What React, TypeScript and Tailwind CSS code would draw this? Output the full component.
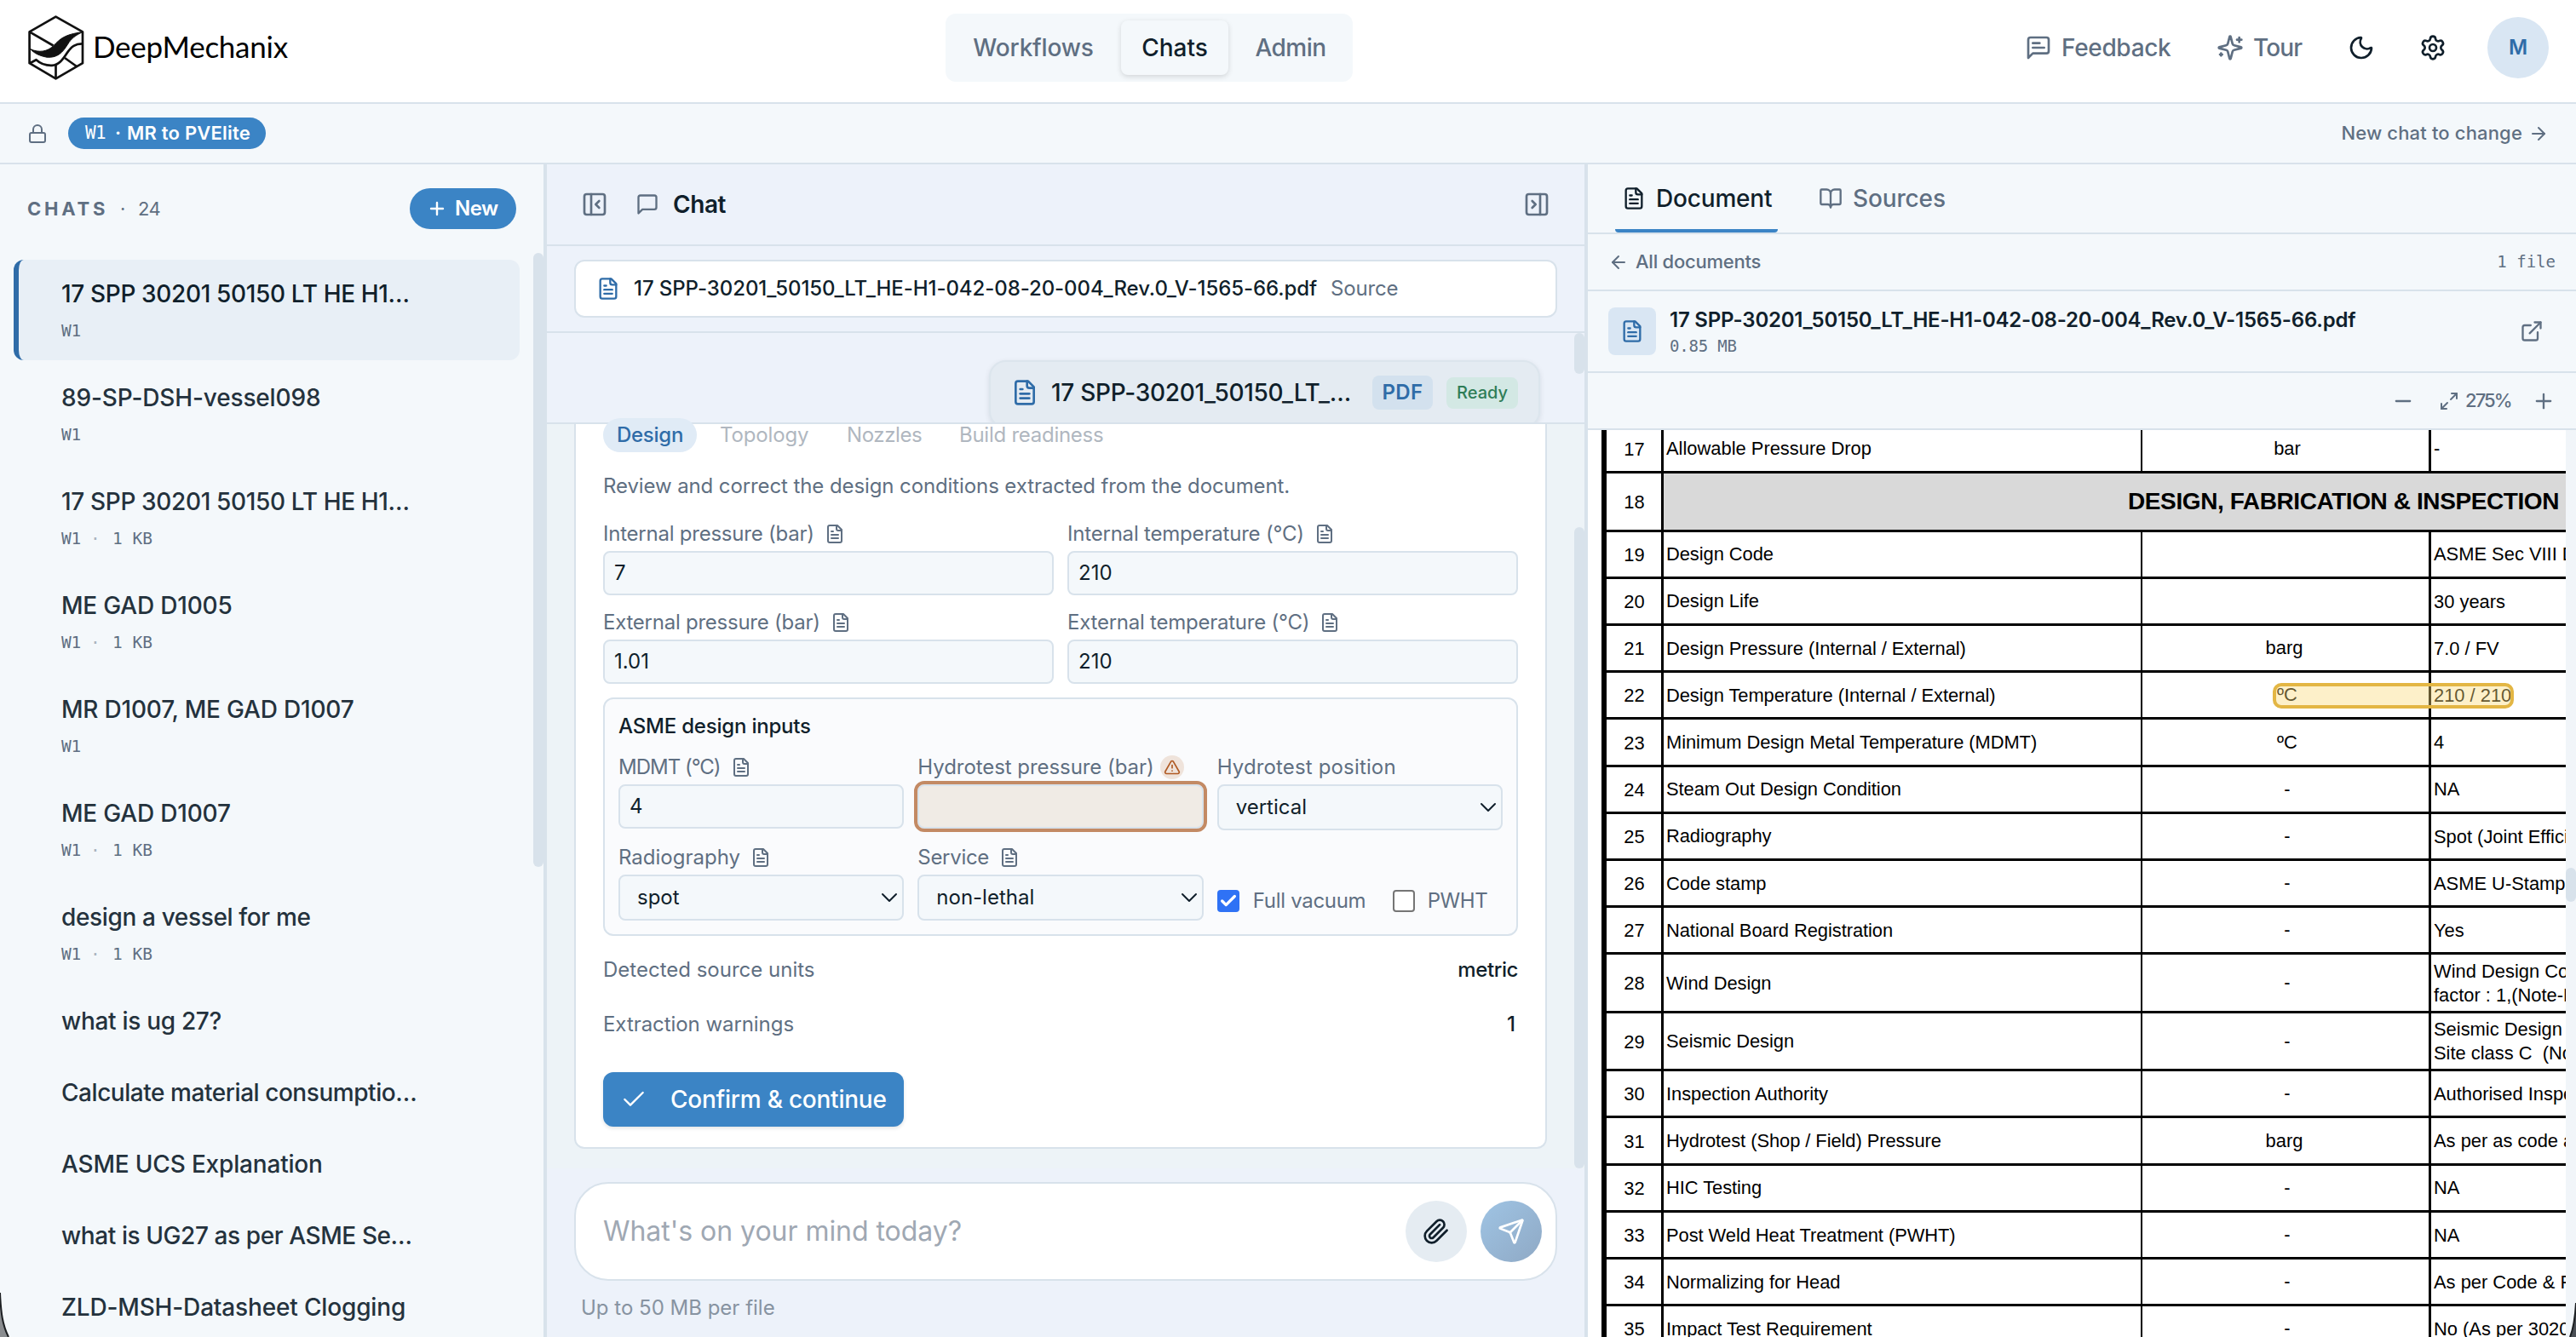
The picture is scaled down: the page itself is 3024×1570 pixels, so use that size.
import type { ReactNode } from "react";
import {
  ArrowLeft,
  ArrowRight,
  BookOpen,
  Check,
  Lock,
  Maximize2,
  Minus,
  Moon,
  PanelLeftClose,
  PanelRightClose,
  Plus,
  Settings,
} from "lucide-react";

type IconProps = { size?: number; className?: string; strokeWidth?: number; children?: ReactNode };

function Glyph({ size = 24, className = "", strokeWidth = 2, children }: IconProps) {
  return (
    <svg
      width={size}
      height={size}
      viewBox="0 0 24 24"
      fill="none"
      stroke="currentColor"
      strokeWidth={strokeWidth}
      strokeLinecap="round"
      strokeLinejoin="round"
      className={`shrink-0 ${className}`}
    >
      {children}
    </svg>
  );
}

const FileText = (p: IconProps) => (
  <Glyph {...p}>
    <path d="M15 2H6a2 2 0 0 0-2 2v16a2 2 0 0 0 2 2h12a2 2 0 0 0 2-2V7Z" />
    <path d="M14 2v4a2 2 0 0 0 2 2h4" />
    <path d="M10 9H8" />
    <path d="M16 13H8" />
    <path d="M16 17H8" />
  </Glyph>
);

const ChatBubble = (p: IconProps) => (
  <Glyph {...p}>
    <path d="M21 15a2 2 0 0 1-2 2H7l-4 4V5a2 2 0 0 1 2-2h14a2 2 0 0 1 2 2z" />
  </Glyph>
);

const FeedbackIcon = (p: IconProps) => (
  <Glyph {...p}>
    <path d="M21 15a2 2 0 0 1-2 2H7l-4 4V5a2 2 0 0 1 2-2h14a2 2 0 0 1 2 2z" />
    <path d="M13 8H7" />
    <path d="M17 12H7" />
  </Glyph>
);

const Sparkles = (p: IconProps) => (
  <Glyph {...p}>
    <path d="M9.937 15.500A2 2 0 0 0 8.500 14.063l-6.135-1.582a.5.5 0 0 1 0-.962L8.500 9.936A2 2 0 0 0 9.937 8.500l1.582-6.135a.5.5 0 0 1 .963 0L14.063 8.500A2 2 0 0 0 15.500 9.937l6.135 1.581a.5.5 0 0 1 0 .964L15.500 14.063a2 2 0 0 0-1.437 1.437l-1.582 6.135a.5.5 0 0 1-.963 0z" />
    <path d="M20 3v4" />
    <path d="M22 5h-4" />
    <path d="M4 17v2" />
    <path d="M5 18H3" />
  </Glyph>
);

const ExternalLink = (p: IconProps) => (
  <Glyph {...p}>
    <path d="M15 3h6v6" />
    <path d="M10 14 21 3" />
    <path d="M18 13v6a2 2 0 0 1-2 2H5a2 2 0 0 1-2-2V8a2 2 0 0 1 2-2h6" />
  </Glyph>
);

const Paperclip = (p: IconProps) => (
  <Glyph {...p}>
    <path d="m21.44 11.05-9.19 9.19a6 6 0 0 1-8.49-8.49l8.57-8.57A4 4 0 1 1 18 8.84l-8.59 8.57a2 2 0 0 1-2.83-2.83l8.49-8.48" />
  </Glyph>
);

const SendIcon = (p: IconProps) => (
  <Glyph {...p}>
    <path d="M14.536 21.686a.5.5 0 0 0 .937-.024l6.5-19a.496.496 0 0 0-.635-.635l-19 6.5a.5.5 0 0 0-.024.937l7.93 3.18a2 2 0 0 1 1.112 1.11z" />
    <path d="m21.854 2.147-10.94 10.939" />
  </Glyph>
);

const Warning = (p: IconProps) => (
  <Glyph {...p}>
    <path d="m21.73 18-8-14a2 2 0 0 0-3.48 0l-8 14A2 2 0 0 0 4 21h16a2 2 0 0 0 1.73-3" />
    <path d="M12 9v4" />
    <path d="M12 17h.01" />
  </Glyph>
);

function Logo() {
  return (
    <svg width="66" height="76" viewBox="0 0 66 76" fill="none" stroke="#111" strokeWidth="2.700" strokeLinejoin="round" className="shrink-0">
      <path d="M32.500 1.600 64 19.400v36.800L32.500 74.400 1.600 56.200V19.400Z" />
      <path d="M1.600 19.400 29.500 35.500" />
      <path
        d="M2.500 39.500C13 44.500 23 42.500 30 35.500 37.500 28 42 22.500 64 19.600 55.500 23.500 50.500 27.500 46.500 34 40.500 44 34 50.200 22 49.200 13.500 47.500 7.500 45 2.500 39.500Z"
        fill="#111"
        strokeWidth="1"
      />
      <path d="M2.500 56 9.500 52.200C16 58.200 22.500 59 28 58.800 36 58.500 41 51.500 45.500 44.500 51 36 55.500 33.500 63.500 33.400" />
      <path d="M32.500 58.500V74M43 50 57 60" />
    </svg>
  );
}

function Header() {
  return (
    <header className="flex h-[122px] shrink-0 items-center border-b-2 border-[#d8e2eb] bg-white pb-2 pl-[33px] pr-8">
      <div className="flex w-[1077px] items-center">
        <Logo />
        <span className="pb-[5px] pl-[10px] font-[Lato] text-[35px] leading-[44px] tracking-[-0.25px] text-black">DeepMechanix</span>
      </div>
      <nav className="flex items-center gap-2 rounded-xl bg-[#f4f8fb] p-2 text-[28px] font-medium text-[#5f6f82]">
        <span className="flex h-16 w-[190px] items-center justify-center tracking-[-0.17px]">Workflows</span>
        <span className="flex h-16 w-[126px] items-center justify-center rounded-lg bg-[#f4f8fb] text-[#101f2b] shadow-[0_2px_6px_rgba(0,0,0,0.14)]">Chats</span>
        <span className="flex h-16 w-[130px] items-center justify-center tracking-[-0.5px]">Admin</span>
      </nav>
      <div className="ml-auto flex items-center text-[28px] font-medium text-[#5f6f82]">
        <FeedbackIcon size={32} />
        <span className="ml-[11px] w-[182px] tracking-[-0.33px]">Feedback</span>
        <Sparkles size={32} />
        <span className="ml-[11px] w-[111px] tracking-[-0.9px]">Tour</span>
        <Moon size={32} className="text-[#101f2b]" />
        <Settings size={32} className="ml-[52px] text-[#101f2b]" />
        <span className="ml-12 flex size-[72px] items-center justify-center rounded-full bg-[#d9e6f3] text-[24px] font-semibold text-[#2f6ca8]">M</span>
      </div>
    </header>
  );
}

function WorkflowBar() {
  return (
    <div className="flex h-[71px] shrink-0 items-center border-b-2 border-[#d8e2eb] bg-[#f4f8fb] pl-8 pr-8 text-[#5f6f82]">
      <Lock size={24} />
      <span className="ml-6 flex h-[37px] items-center rounded-full bg-[#3b84c5] pl-5 pr-[18px] text-[22px] text-white">
        <span className="w-[35px] font-['DejaVu_Sans_Mono'] text-[21px] tracking-[-0.6px]">W1</span>
        <span className="w-[14px] font-semibold">·</span>
        <span className="font-semibold tracking-[0.2px]">MR to PVElite</span>
      </span>
      <span className="ml-auto text-[22px] font-medium tracking-[0.16px]">New chat to change</span>
      <ArrowRight size={24} className="ml-[7px]" />
    </div>
  );
}

const chats: { title: string; meta?: string[]; cls: string; active?: boolean }[] = [
  { title: "17 SPP 30201 50150 LT HE H1…", meta: ["W1"], cls: "tracking-[-0.35px]", active: true },
  { title: "89-SP-DSH-vessel098", meta: ["W1"], cls: "tracking-[-0.15px]" },
  { title: "17 SPP 30201 50150 LT HE H1…", meta: ["W1", "1 KB"], cls: "tracking-[-0.35px]" },
  { title: "ME GAD D1005", meta: ["W1", "1 KB"], cls: "tracking-[-0.2px]" },
  { title: "MR D1007, ME GAD D1007", meta: ["W1"], cls: "tracking-[-0.2px]" },
  { title: "ME GAD D1007", meta: ["W1", "1 KB"], cls: "tracking-[-0.2px]" },
  { title: "design a vessel for me", meta: ["W1", "1 KB"], cls: "tracking-[-0.36px]" },
  { title: "what is ug 27?", cls: "tracking-[-0.3px]" },
  { title: "Calculate material consumptio…", cls: "tracking-[-0.45px]" },
  { title: "ASME UCS Explanation", cls: "tracking-[-0.18px]" },
  { title: "what is UG27 as per ASME Se…", cls: "tracking-[-0.41px]" },
  { title: "ZLD-MSH-Datasheet Clogging", cls: "tracking-[-0.16px]" },
];

function Sidebar() {
  return (
    <aside className="flex w-[642px] shrink-0 flex-col border-r-4 border-[#d8e2eb] bg-[#f4f8fb]">
      <div className="flex h-[104px] shrink-0 items-center pl-8 pr-8 text-[22px] text-[#5f6f82]">
        <span className="w-[109px] font-bold tracking-[3.8px]">CHATS</span>
        <span className="w-[21px]">·</span>
        <span className="tracking-[-0.6px]">24</span>
        <span className="ml-auto flex h-12 w-[125px] items-center rounded-full bg-[#3b84c5] pl-5 text-[24px] font-semibold tracking-[-0.5px] text-white">
          <Plus size={24} className="mr-[9px]" strokeWidth={2.4} />
          New
        </span>
      </div>
      <div className="flex min-h-0 flex-1">
        <div className="flex min-w-0 flex-1 flex-col gap-1 overflow-hidden pl-4 pr-4 pt-2">
          {chats.map((c, i) => (
            <div
              key={i}
              className={`flex shrink-0 flex-col rounded-xl border-l-[6px] py-5 pl-[50px] ${
                c.active ? "border-[#2f6ca8] bg-[#e8eff6] text-[#101f2b]" : "border-transparent text-[#24323d]"
              }`}
            >
              <span className={`text-[28px] font-medium leading-10 ${c.cls}`}>{c.title}</span>
              {c.meta && (
                <span className="mt-[9px] flex font-['DejaVu_Sans_Mono'] text-[19.5px] leading-[29px] text-[#5f6f82]">
                  <span className="w-[34px] tracking-[-0.2px]">{c.meta[0]}</span>
                  {c.meta[1] && (
                    <>
                      <span className="w-[26px] text-[#a9b3be]">·</span>
                      <span>{c.meta[1]}</span>
                    </>
                  )}
                </span>
              )}
            </div>
          ))}
        </div>
        <div className="h-[721px] w-3 rounded-full bg-[#d8e2eb]" />
      </div>
    </aside>
  );
}

function FieldLabel({ text, cls = "", icon = true, warn = false }: { text: string; cls?: string; icon?: boolean; warn?: boolean }) {
  return (
    <div className="flex h-8 items-center pb-px text-[24px] text-[#5f6f82]">
      <span className={cls}>{text}</span>
      {warn && (
        <span className="ml-[7px] flex size-7 items-center justify-center rounded-full bg-[#efe3db] text-[#b05a24]">
          <Warning size={20} />
        </span>
      )}
      {icon && !warn && <FileText size={24} className="ml-3" />}
    </div>
  );
}

function Field({ label, value, cls }: { label: string; value: string; cls?: string }) {
  return (
    <div className="flex flex-col gap-1">
      <FieldLabel text={label} cls={cls} />
      <div className="flex h-[52px] items-center rounded-lg border-2 border-[#d8e2eb] bg-[#f4f8fb] pl-[11px] text-[24px] text-[#101f2b]">{value}</div>
    </div>
  );
}

function Select({ label, value, cls, icon }: { label: string; value: string; cls?: string; icon?: boolean }) {
  return (
    <div className="flex flex-col gap-1">
      <FieldLabel text={label} cls={cls} icon={icon} />
      <div className="flex h-[54px] items-center justify-between rounded-lg border-2 border-[#d8e2eb] bg-[#f4f8fb] pl-5 pr-[5px] text-[24px] text-[#101f2b]">
        {value}
        <svg width="20" height="12" viewBox="0 0 20 12" fill="none" stroke="currentColor" strokeWidth="2" strokeLinecap="round" strokeLinejoin="round">
          <path d="m2 2 8 8 8-8" />
        </svg>
      </div>
    </div>
  );
}

function DesignForm() {
  return (
    <div className="flex w-[1142px] flex-col rounded-b-xl border-x-2 border-b-2 border-[#d8e2eb] bg-white px-8">
      <div className="flex h-[33px] items-end text-[24px] text-[#b0b7c0]">
        <div className="flex h-10 w-[110px] items-center justify-center rounded-full bg-[#e0ebf6] font-medium tracking-[-0.25px] text-[#2f6ca8]">Design</div>
        <div className="ml-[27px] flex h-10 items-center">
          <span className="w-[149px] tracking-[-0.15px]">Topology</span>
          <span className="w-[132px] tracking-[-0.4px]">Nozzles</span>
          <span className="tracking-[-0.26px]">Build readiness</span>
        </div>
      </div>
      <p className="mt-[20px] h-10 text-[24px] leading-10 tracking-[-0.1px] text-[#5f6f82]">
        Review and correct the design conditions extracted from the document.
      </p>
      <div className="mt-5 grid grid-cols-2 gap-4">
        <Field label="Internal pressure (bar)" value="7" cls="tracking-[-0.23px]" />
        <Field label="Internal temperature (°C)" value="210" cls="tracking-[-0.2px]" />
        <Field label="External pressure (bar)" value="1.01" cls="tracking-[-0.25px]" />
        <Field label="External temperature (°C)" value="210" cls="tracking-[-0.24px]" />
      </div>
      <section className="mt-4 flex h-[280px] flex-col rounded-xl border-2 border-[#d8e2eb] bg-[#fafbfd] px-4 pt-4 text-[24px]">
        <h3 className="h-8 font-medium leading-8 tracking-[-0.2px] text-[#101f2b]">ASME design inputs</h3>
        <div className="mt-4 grid grid-cols-3 gap-x-4 gap-y-4">
          <Field label="MDMT (°C)" value="4" cls="tracking-[-1px]" />
          <div className="flex flex-col gap-1">
            <FieldLabel text="Hydrotest pressure (bar)" warn cls="tracking-[-0.06px]" />
            <div className="h-[52px] rounded-lg border-2 border-[#d8e2eb] bg-[#f0ebe5] outline-4 outline-[#c38a64]" />
          </div>
          <Select label="Hydrotest position" value="vertical" icon={false} cls="tracking-[0.15px]" />
          <Select label="Radiography" value="spot" />
          <Select label="Service" value="non-lethal" cls="tracking-[-0.3px]" />
          <div className="flex items-center pt-[43px] text-[#5f6f82]">
            <span className="flex size-[26px] items-center justify-center rounded bg-[#2f72f5] text-white">
              <Check size={22} strokeWidth={3.6} />
            </span>
            <span className="ml-[16px] w-[164px] tracking-[-0.29px]">Full vacuum</span>
            <span className="size-[26px] rounded border-2 border-[#757575] bg-white" />
            <span className="ml-[15px] tracking-[-0.4px]">PWHT</span>
          </div>
        </div>
      </section>
      <div className="mt-2 flex h-16 items-center justify-between text-[24px] text-[#5f6f82]">
        <span>Detected source units</span>
        <span className="font-medium tracking-[-0.4px] text-[#101f2b]">metric</span>
      </div>
      <div className="flex h-16 items-center justify-between text-[24px] text-[#5f6f82]">
        <span className="tracking-[-0.06px]">Extraction warnings</span>
        <span className="pr-[3px] font-medium text-[#101f2b]">1</span>
      </div>
      <div className="mb-6 mt-6 flex h-16 w-[353px] items-center rounded-xl bg-[#3b84c5] pl-5 text-[28px] font-medium tracking-[-0.24px] text-white shadow-[0_2px_4px_rgba(16,31,43,0.12)]">
        <Check size={32} strokeWidth={1.8} className="mr-[27px]" />
        Confirm &amp; continue
      </div>
    </div>
  );
}

function ChatPanel() {
  return (
    <main className="flex w-[1222px] shrink-0 flex-col border-r-4 border-[#d8e2eb] bg-[#edf2fa]">
      <div className="flex h-24 shrink-0 items-center border-b-2 border-[#d8e2eb] px-10 text-[#5f6f82]">
        <PanelLeftClose size={32} />
        <ChatBubble size={28} className="ml-8" />
        <span className="ml-4 text-[28px] font-semibold tracking-[-0.45px] text-[#101f2b]">Chat</span>
        <PanelRightClose size={32} className="ml-auto" />
      </div>
      <div className="shrink-0 border-b-2 border-[#d8e2eb] px-8 py-4">
        <div className="flex h-[68px] items-center rounded-xl border-2 border-[#d8e2eb] bg-white pl-6 text-[24px]">
          <FileText size={28} className="text-[#2f6ca8]" />
          <span className="ml-4 font-medium tracking-[-0.08px] text-[#101f2b]">
            17 SPP-30201_50150_LT_HE-H1-042-08-20-004_Rev.0_V-1565-66.pdf
          </span>
          <span className="ml-[16px] tracking-[-0.15px] text-[#5f6f82]">Source</span>
        </div>
      </div>
      <div className="flex h-[107px] shrink-0 justify-end overflow-hidden border-b-2 border-[#d8e2eb]">
        <div className="mr-10 mt-8 flex h-20 w-[647px] shrink-0 items-center rounded-[20px] border-2 border-[#dce5ed] bg-[#e4ebf2] pl-6 text-[28px] font-medium shadow-[0_2px_6px_rgba(16,31,43,0.10)]">
          <FileText size={32} className="-mt-1 text-[#2f6ca8]" />
          <span className="-mt-1 ml-[15px] w-[377px] tracking-[-0.29px] text-[#101f2b]">17 SPP-30201_50150_LT_…</span>
          <span className="-mt-1 flex h-10 w-[71px] items-center justify-center rounded-lg bg-[#d3e1ee] text-[24px] font-semibold tracking-[0.3px] text-[#2f6ca8]">
            PDF
          </span>
          <span className="-mt-1 ml-4 flex h-[37px] w-[84px] items-center justify-center rounded-lg bg-[#d3e8e4] text-[20px] text-[#2f7d57]">Ready</span>
        </div>
        <div className="h-12 w-3 rounded-full bg-[#d8e2eb]" />
      </div>
      <div className="flex h-[874px] shrink-0 justify-between bg-[#edf3f7] pl-8">
        <div className="flex flex-col">
          <DesignForm />
        </div>
        <div className="mt-[121px] w-3 rounded-full bg-[#d8e2eb]" />
      </div>
      <div className="flex flex-1 flex-col px-8 pt-4">
        <div className="flex h-[116px] items-center rounded-[40px] border-2 border-[#d8e2eb] bg-white pl-8 pr-4">
          <span className="text-[32px] tracking-[-0.04px] text-[#9fa8b3]">What's on your mind today?</span>
          <span className="ml-auto flex size-[72px] items-center justify-center rounded-full bg-[#e5ecf2] text-[#101f2b]">
            <Paperclip size={32} />
          </span>
          <span className="ml-4 flex size-[72px] items-center justify-center rounded-full bg-linear-to-br from-[#9fc4e4] to-[#8fa9c5] text-white">
            <SendIcon size={32} />
          </span>
        </div>
        <span className="ml-2 mt-[14px] text-[24px] leading-9 text-[#8793a1]">Up to 50 MB per file</span>
      </div>
    </main>
  );
}

type Row = { n: number; label: string; unit?: string; value: string[]; h: string };
const rows: Row[] = [
  { n: 19, label: "Design Code", value: ["ASME Sec VIII Div.1"], h: "h-[55.2px]" },
  { n: 20, label: "Design Life", value: ["30 years"], h: "h-[55.2px]" },
  { n: 21, label: "Design Pressure (Internal / External)", unit: "barg", value: ["7.0 / FV"], h: "h-[55.2px]" },
  { n: 22, label: "Design Temperature (Internal / External)", unit: "ºC", value: ["210 / 210"], h: "h-[55.2px]" },
  { n: 23, label: "Minimum Design Metal Temperature (MDMT)", unit: "ºC", value: ["4"], h: "h-[55.2px]" },
  { n: 24, label: "Steam Out Design Condition", unit: "-", value: ["NA"], h: "h-[55.2px]" },
  { n: 25, label: "Radiography", unit: "-", value: ["Spot (Joint Efficiency)"], h: "h-[55.2px]" },
  { n: 26, label: "Code stamp", unit: "-", value: ["ASME U-Stamp"], h: "h-[55.2px]" },
  { n: 27, label: "National Board Registration", unit: "-", value: ["Yes"], h: "h-[55.2px]" },
  { n: 28, label: "Wind Design", unit: "-", value: ["Wind Design Code", "factor : 1,(Note-N)"], h: "h-[68.5px]" },
  { n: 29, label: "Seismic Design", unit: "-", value: ["Seismic Design", "Site class C  (Note)"], h: "h-[68.5px]" },
  { n: 30, label: "Inspection Authority", unit: "-", value: ["Authorised Inspector"], h: "h-[55.2px]" },
  { n: 31, label: "Hydrotest (Shop / Field) Pressure", unit: "barg", value: ["As per as code a"], h: "h-[55.2px]" },
  { n: 32, label: "HIC Testing", unit: "-", value: ["NA"], h: "h-[55.2px]" },
  { n: 33, label: "Post Weld Heat Treatment (PWHT)", unit: "-", value: ["NA"], h: "h-[55.2px]" },
  { n: 34, label: "Normalizing for Head", unit: "-", value: ["As per Code & P"], h: "h-[55.2px]" },
  { n: 35, label: "Impact Test Requirement", unit: "-", value: ["No (As per 30201)"], h: "h-[55.2px]" },
];

function SheetRow({ row }: { row: Row }) {
  return (
    <div className={`flex shrink-0 border-b-[3px] border-black ${row.h}`}>
      <div className="flex w-[67px] shrink-0 items-center justify-center border-r-[3px] border-black pl-px pt-[3px]">{row.n}</div>
      <div className="flex w-[562px] shrink-0 items-center border-r-2 border-black pl-[3px] pt-[2px] tracking-[-0.06px]">{row.label}</div>
      <div className={`flex w-[339px] shrink-0 items-center justify-center border-r-[3px] border-black pt-px ${row.unit === "barg" ? "pr-[3px]" : "pl-1"}`}>
        {row.unit}
      </div>
      <div className="flex min-w-0 flex-1 flex-col justify-center overflow-hidden pl-[3px] pt-px leading-[27.6px]">
        {row.value.map((v) => (
          <span key={v} className="whitespace-pre">
            {v}
          </span>
        ))}
      </div>
    </div>
  );
}

function DocumentPanel() {
  return (
    <section className="flex min-w-0 flex-1 flex-col bg-[#f4f8fb] text-[#5f6f82]">
      <div className="flex h-[82px] shrink-0 items-stretch border-b-2 border-[#d8e2eb] pl-8 text-[28px] font-medium">
        <div className="flex w-[191px] items-center rounded-sm border-b-4 border-[#3b84c5] pl-2 pt-[3px] text-[#101f2b]">
          <FileText size={28} />
          <span className="ml-3 tracking-[-0.18px]">Document</span>
        </div>
        <div className="ml-12 flex items-center pb-px">
          <BookOpen size={28} />
          <span className="ml-3 tracking-[-0.14px]">Sources</span>
        </div>
      </div>
      <div className="flex h-[67px] shrink-0 items-center border-b-2 border-[#d8e2eb] pl-6 pr-6 text-[22px]">
        <ArrowLeft size={24} />
        <span className="ml-2 font-medium tracking-[-0.24px]">All documents</span>
        <span className="ml-auto font-['DejaVu_Sans_Mono'] text-[19px]">1 file</span>
      </div>
      <div className="flex h-24 shrink-0 items-center border-b-2 border-[#d8e2eb] pl-6 pr-[38px]">
        <span className="flex size-14 shrink-0 items-center justify-center rounded-lg bg-[#d9e6f3] text-[#2f6ca8]">
          <FileText size={28} />
        </span>
        <div className="ml-4 flex flex-col">
          <span className="text-[24px] font-semibold leading-[33px] tracking-[-0.22px] text-[#101f2b]">
            17 SPP-30201_50150_LT_HE-H1-042-08-20-004_Rev.0_V-1565-66.pdf
          </span>
          <span className="font-['DejaVu_Sans_Mono'] text-[19px] leading-[28px] tracking-[-0.2px]">0.85 MB</span>
        </div>
        <ExternalLink size={28} className="ml-auto" />
      </div>
      <div className="flex h-[67px] shrink-0 items-center justify-end border-b-2 border-[#d8e2eb] pr-6 text-[22px] font-medium">
        <Minus size={28} />
        <Maximize2 size={24} className="ml-7" />
        <span className="ml-[7px] w-[78px] tracking-[-1.9px]">275%</span>
        <Plus size={28} />
      </div>
      <div className="flex min-h-0 flex-1">
        <div className="relative flex min-w-0 flex-1 overflow-hidden bg-white pl-4 font-['Liberation_Sans'] text-[21.9px] text-black">
          <div className="flex min-w-0 flex-1 flex-col border-l-[6px] border-black">
            <div className="flex h-[51px] shrink-0 border-b-[3px] border-black">
              <div className="flex w-[67px] shrink-0 items-center justify-center border-r-[3px] border-black pb-[2px] pl-px">17</div>
              <div className="flex w-[562px] shrink-0 items-center border-r-2 border-black pb-[4px] pl-[3px]">Allowable Pressure Drop</div>
              <div className="flex w-[339px] shrink-0 items-center justify-center border-r-[3px] border-black pb-[4px] pl-1">bar</div>
              <div className="flex items-center pb-[4px] pl-[3px]">-</div>
            </div>
            <div className="flex h-[68.6px] shrink-0 border-b-[3px] border-black">
              <div className="flex w-[67px] shrink-0 items-center justify-center border-r-[3px] border-black pl-px pt-[3px]">18</div>
              <div className="flex flex-1 items-center justify-end bg-[#d9d9d9] pr-[8px] text-[28px] font-bold tracking-[-0.41px]">
                DESIGN, FABRICATION &amp; INSPECTION
              </div>
            </div>
            {rows.map((r) => (
              <SheetRow key={r.n} row={r} />
            ))}
          </div>
          <div className="absolute left-[804px] top-[297px] h-[30px] w-[283px] rounded-[10px] border-4 border-[#e3b644] bg-[#f9d978]/40" />
        </div>
        <div className="w-3 shrink-0 bg-[#f1f5f9] pt-[514px]">
          <div className="h-10 w-3 rounded-full bg-[#d8e2eb]" />
        </div>
      </div>
    </section>
  );
}

export default function App() {
  return (
    <div className="relative flex h-[1570px] w-[3024px] flex-col overflow-hidden bg-[#f4f8fb] font-[Inter,sans-serif] text-[#101f2b]">
      <Header />
      <WorkflowBar />
      <div className="flex min-h-0 flex-1">
        <Sidebar />
        <ChatPanel />
        <DocumentPanel />
      </div>
      <svg className="absolute bottom-0 left-0" width="12" height="56" viewBox="0 0 12 56">
        <path d="M0 4C1 28 3 42 10 56H0Z" fill="#8a8d90" />
        <path d="M0 4C1 28 3 42 10 56" fill="none" stroke="#1c1f22" strokeWidth="2" />
      </svg>
      <svg className="absolute bottom-0 right-0" width="10" height="44" viewBox="0 0 10 44">
        <path d="M10 4C9 22 7 34 3 44H10Z" fill="#4a4f55" />
        <path d="M10 4C9 22 7 34 3 44" fill="none" stroke="#1c1f22" strokeWidth="2" />
      </svg>
    </div>
  );
}
